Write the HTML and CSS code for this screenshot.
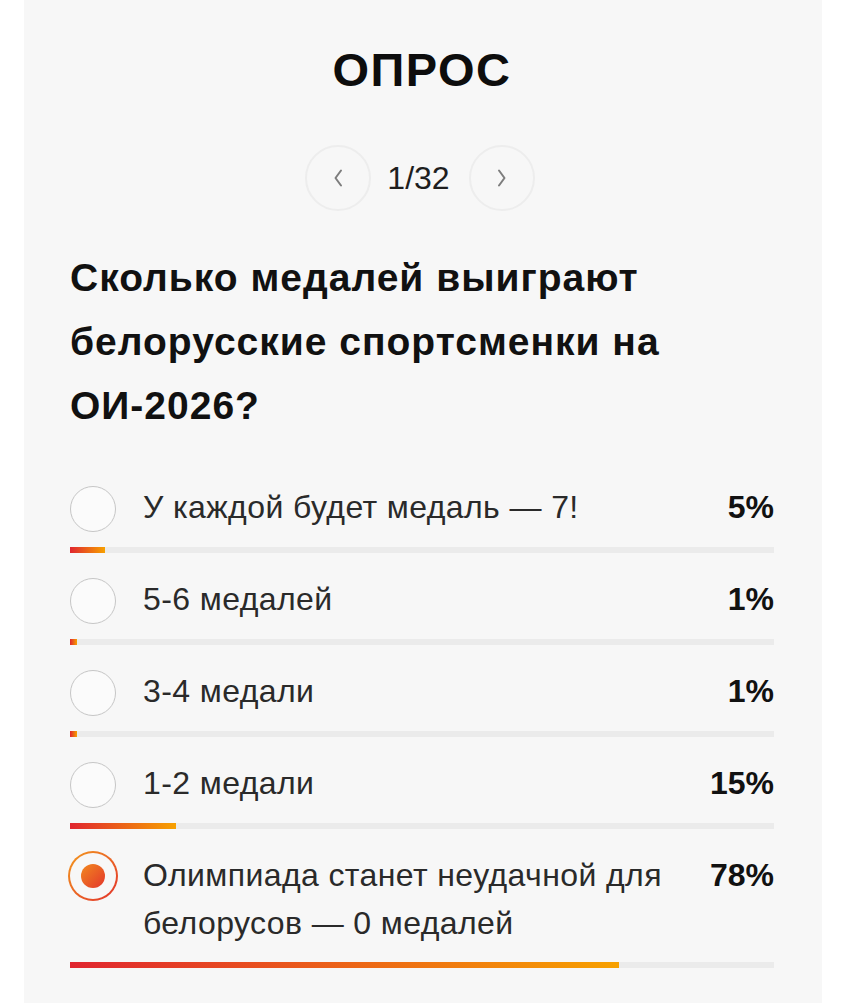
FILE: index.html
```html
<!DOCTYPE html>
<html lang="ru">
<head>
<meta charset="utf-8">
<title>Опрос</title>
<link rel="stylesheet" href="styles.css">
</head>
<body>
<main class="poll">
  <h2 class="poll-title">ОПРОС</h2>
  <nav class="pager">
    <button class="pager-btn" aria-label="Назад">
      <svg width="12" height="20" viewBox="0 0 12 20"><path d="M9 2.5 L3.5 10 L9 17.5" fill="none" stroke="#7d7d7d" stroke-width="2" stroke-linecap="round" stroke-linejoin="round"/></svg>
    </button>
    <span class="pager-count">1/32</span>
    <button class="pager-btn" aria-label="Вперёд">
      <svg width="12" height="20" viewBox="0 0 12 20"><path d="M3 2.5 L8.5 10 L3 17.5" fill="none" stroke="#7d7d7d" stroke-width="2" stroke-linecap="round" stroke-linejoin="round"/></svg>
    </button>
  </nav>
  <h3 class="question">Сколько медалей выиграют белорусские спортсменки на ОИ-2026?</h3>
  <ul class="options">
    <li class="option">
      <div class="option-row">
        <span class="radio"></span>
        <span class="label">У каждой будет медаль — 7!</span>
        <span class="pct">5%</span>
      </div>
      <div class="bar"><div class="fill" style="width:5%"></div></div>
    </li>
    <li class="option">
      <div class="option-row">
        <span class="radio"></span>
        <span class="label">5-6 медалей</span>
        <span class="pct">1%</span>
      </div>
      <div class="bar"><div class="fill" style="width:1%"></div></div>
    </li>
    <li class="option">
      <div class="option-row">
        <span class="radio"></span>
        <span class="label">3-4 медали</span>
        <span class="pct">1%</span>
      </div>
      <div class="bar"><div class="fill" style="width:1%"></div></div>
    </li>
    <li class="option">
      <div class="option-row">
        <span class="radio"></span>
        <span class="label">1-2 медали</span>
        <span class="pct">15%</span>
      </div>
      <div class="bar"><div class="fill" style="width:15%"></div></div>
    </li>
    <li class="option option-selected">
      <div class="option-row">
        <span class="radio radio-on"><span class="radio-dot"></span></span>
        <span class="label">Олимпиада станет неудачной для белорусов — 0 медалей</span>
        <span class="pct">78%</span>
      </div>
      <div class="bar"><div class="fill" style="width:78%"></div></div>
    </li>
  </ul>
</main>
</body>
</html>
```

FILE: styles.css
```css
* { box-sizing: border-box; }
html, body { margin: 0; padding: 0; background: #ffffff; }
body {
  font-family: "Liberation Sans", Arial, Helvetica, sans-serif;
  color: #222;
}
.poll {
  margin-left: 24px;
  width: 798px;
  min-height: 1003px;
  background: #f7f7f7;
  padding: 46px 48px 20px 46px;
}
.poll-title {
  margin: 0;
  text-align: center;
  font-size: 47px;
  line-height: 47px;
  font-weight: 700;
  color: #0d0d0d;
  letter-spacing: 1.5px;
}
.pager {
  margin-top: 52px;
  display: flex;
  justify-content: center;
  align-items: center;
  gap: 16px;
  margin-left: -4px;
}
.pager-btn {
  width: 66px;
  height: 66px;
  border-radius: 50%;
  border: 2px solid #ededed;
  background: transparent;
  display: flex;
  align-items: center;
  justify-content: center;
  padding: 0;
}
.pager-count {
  font-size: 32px;
  line-height: 40px;
  color: #1e1e1e;
  text-align: center;
  padding-right: 3px;
}
.question {
  margin: 35px 0 0;
  font-size: 39px;
  line-height: 64px;
  font-weight: 700;
  color: #111;
  letter-spacing: 1px;
}
.options {
  list-style: none;
  margin: 0;
  padding: 0;
  margin-top: 45px;
}
.option { margin-bottom: 22px; }
.option-row {
  display: flex;
  align-items: flex-start;
}
.radio {
  flex: 0 0 46px;
  width: 46px;
  height: 46px;
  margin-top: 3px;
  border-radius: 50%;
  border: 1.5px solid #c6c6c6;
  background: #fbfbfb;
}
.radio-on {
  flex: 0 0 50px;
  width: 50px;
  height: 50px;
  margin-top: 0;
  margin-left: -2px;
  margin-right: -2px;
  border: none;
  background: linear-gradient(135deg, #f39a1e, #e2312c);
  display: flex;
  align-items: center;
  justify-content: center;
  position: relative;
}
.radio-on::before {
  content: "";
  position: absolute;
  inset: 2px;
  border-radius: 50%;
  background: #f7f7f7;
}
.radio-dot {
  position: relative;
  width: 24px;
  height: 24px;
  border-radius: 50%;
  background: linear-gradient(135deg, #f2891f, #e3362b);
}
.label {
  flex: 1;
  margin-left: 27px;
  padding-right: 12px;
  font-size: 32px;
  line-height: 48px;
  color: #2a2a2a;
  letter-spacing: 0.4px;
}
.pct {
  font-size: 32px;
  line-height: 48px;
  font-weight: 700;
  color: #111;
  text-align: right;
}
.bar {
  margin-top: 15px;
  height: 6px;
  background: #ebebeb;
}
.fill {
  height: 100%;
  background: linear-gradient(90deg, #e0252f, #f7a100);
}
```
